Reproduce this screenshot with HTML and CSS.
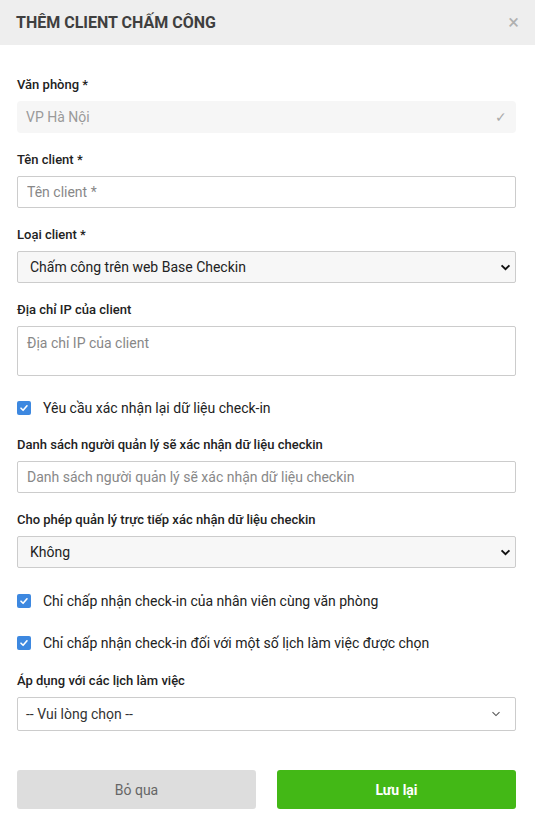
FILE: index.html
```html
<!DOCTYPE html>
<html lang="vi">
<head>
<meta charset="utf-8">
<title>Thêm client chấm công</title>
<link rel="stylesheet" href="styles.css">
</head>
<body>
<div class="modal">
  <div class="modal-header">
    <h1 class="modal-title">THÊM CLIENT CHẤM CÔNG</h1>
    <span class="close">&times;</span>
  </div>
  <form class="modal-body">
    <div class="field">
      <label class="label">Văn phòng *</label>
      <div class="input input-disabled">
        <span>VP Hà Nội</span>
        <span class="tick">✓</span>
      </div>
    </div>
    <div class="field">
      <label class="label">Tên client *</label>
      <input class="input" type="text" placeholder="Tên client *">
    </div>
    <div class="field">
      <label class="label">Loại client *</label>
      <select class="input select"><option>Chấm công trên web Base Checkin</option></select>
    </div>
    <div class="field">
      <label class="label">Địa chỉ IP của client</label>
      <textarea class="input textarea" placeholder="Địa chỉ IP của client"></textarea>
    </div>
    <div class="check check-first">
      <span class="box"><svg viewBox="0 0 14 14" width="14" height="14"><path d="M4 7.2 L6.1 9.3 L10 4.8" fill="none" stroke="#fff" stroke-width="1.6" stroke-linecap="round" stroke-linejoin="round"/></svg></span>
      <span class="check-text">Yêu cầu xác nhận lại dữ liệu check-in</span>
    </div>
    <div class="field">
      <label class="label">Danh sách người quản lý sẽ xác nhận dữ liệu checkin</label>
      <input class="input" type="text" placeholder="Danh sách người quản lý sẽ xác nhận dữ liệu checkin">
    </div>
    <div class="field field-last">
      <label class="label">Cho phép quản lý trực tiếp xác nhận dữ liệu checkin</label>
      <select class="input select"><option>Không</option></select>
    </div>
    <div class="check check-mid">
      <span class="box"><svg viewBox="0 0 14 14" width="14" height="14"><path d="M4 7.2 L6.1 9.3 L10 4.8" fill="none" stroke="#fff" stroke-width="1.6" stroke-linecap="round" stroke-linejoin="round"/></svg></span>
      <span class="check-text">Chỉ chấp nhận check-in của nhân viên cùng văn phòng</span>
    </div>
    <div class="check check-end">
      <span class="box"><svg viewBox="0 0 14 14" width="14" height="14"><path d="M4 7.2 L6.1 9.3 L10 4.8" fill="none" stroke="#fff" stroke-width="1.6" stroke-linecap="round" stroke-linejoin="round"/></svg></span>
      <span class="check-text">Chỉ chấp nhận check-in đối với một số lịch làm việc được chọn</span>
    </div>
    <div class="field field-apply">
      <label class="label">Áp dụng với các lịch làm việc</label>
      <div class="input picker">
        <span>-- Vui lòng chọn --</span>
        <svg class="caret" viewBox="0 0 10 6" width="10" height="6"><path d="M1.5 1.2 L5 4.6 L8.5 1.2" fill="none" stroke="#555" stroke-width="1.1"/></svg>
      </div>
    </div>
    <div class="actions">
      <button type="button" class="btn btn-cancel">Bỏ qua</button>
      <button type="button" class="btn btn-save">Lưu lại</button>
    </div>
  </form>
</div>
</body>
</html>
```
FILE: styles.css
```css
* { box-sizing: border-box; }
html, body { margin: 0; padding: 0; background: #fff; }
body { font-family: Roboto, "Liberation Sans", Arial, sans-serif; color: #333; }

.modal { width: 535px; }

.modal-header {
  height: 45px;
  background: #eeeeee;
  display: flex;
  align-items: center;
  justify-content: space-between;
  padding: 0 16px 0 16px;
}
.modal-title {
  margin: 0;
  font-size: 16px;
  font-weight: 700;
  color: #3f3f3f;
}
.close {
  font-size: 20px;
  color: #b0b0b0;
  line-height: 1;
  margin-top: -2px;
}

.modal-body {
  padding: 32px 19px 0 17px;
  display: flex;
  flex-direction: column;
}

.field { display: flex; flex-direction: column; margin-bottom: 19px; }
.field-last { margin-bottom: 23px; }
.label {
  font-size: 13px;
  line-height: 16px;
  font-weight: 500;
  color: #222;
  margin-bottom: 8px;
}

.input {
  width: 100%;
  height: 32px;
  border: 1px solid #cccccc;
  border-radius: 2px;
  background: #fff;
  font-family: inherit;
  font-size: 14px;
  color: #333;
  padding: 0 9px;
  outline: none;
  margin: 0;
}
.input::placeholder { color: #888; }

.input-disabled {
  border: none;
  background: #f6f6f6;
  border-radius: 4px;
  display: flex;
  align-items: center;
  justify-content: space-between;
  color: #9a9a9a;
  padding: 0 9px 0 9px;
}
.tick { color: #aaa; font-size: 14px; }

.select {
  appearance: none;
  -webkit-appearance: none;
  background: #f7f7f7 url("data:image/svg+xml,%3Csvg xmlns='http://www.w3.org/2000/svg' width='12' height='8' viewBox='0 0 12 8'%3E%3Cpath d='M1.5 1.5 L6 6 L10.5 1.5' fill='none' stroke='%23111' stroke-width='2.2'/%3E%3C/svg%3E") no-repeat right 4px center;
  background-size: 11px 7px;
  color: #222;
  padding: 0 12px;
}

.textarea {
  height: 50px;
  resize: none;
  padding: 8px 9px;
  line-height: 17px;
  display: block;
}

.check {
  display: flex;
  align-items: center;
  height: 20px;
}
.check-first { margin-top: 3px; margin-bottom: 19px; }
.check-mid { margin-bottom: 22px; }
.check-end { margin-bottom: 20px; }
.box {
  width: 14px;
  height: 14px;
  background: #3d88e0;
  border-radius: 2px;
  display: flex;
  margin-right: 12px;
}
.box svg { display: block; }
.check-text { font-size: 14px; color: #222; }

.picker {
  height: 34px;
  display: flex;
  align-items: center;
  justify-content: space-between;
  color: #333;
  padding: 0 14px 0 8px;
}
.caret { display: block; }

.field-apply { margin-bottom: 39px; }

.actions {
  display: grid;
  grid-template-columns: 1fr 1fr;
  column-gap: 21px;
}
.btn {
  height: 39px;
  border: none;
  border-radius: 3px;
  font-family: inherit;
  font-size: 14px;
}
.btn-cancel { background: #dddddd; color: #666; }
.btn-save { background: #43b816; color: #fff; font-weight: 700; }
```
